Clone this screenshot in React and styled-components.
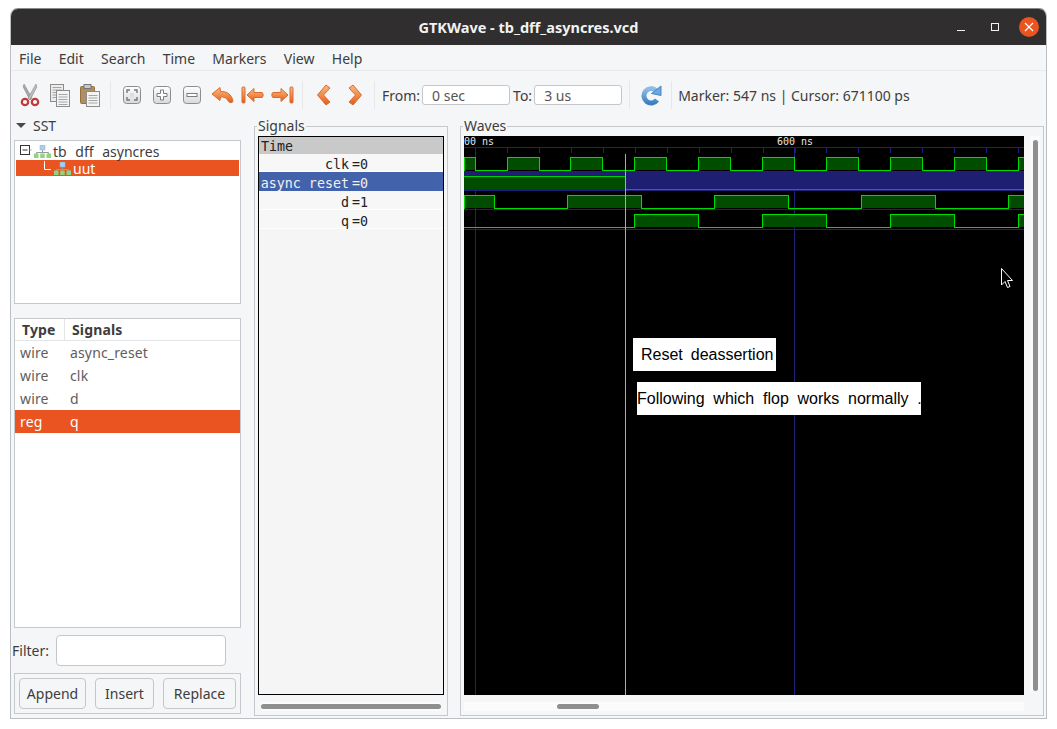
import React from "react";
import styled, { createGlobalStyle } from "styled-components";

const GlobalStyle = createGlobalStyle`
  html, body {
    margin: 0;
    padding: 0;
    background: #ffffff;
  }
  body {
    font-family: "Noto Sans", "Liberation Sans", sans-serif;
    font-size: 14px;
    color: #3d3d3d;
  }
`;

const Page = styled.div`
  width: 1057px;
  height: 729px;
  padding: 8px 0 0 10px;
  box-sizing: border-box;
  overflow: hidden;
`;

const Window = styled.div`
  width: 1037px;
  height: 711px;
  box-sizing: border-box;
  display: flex;
  flex-direction: column;
  background: #f5f6f7;
  border: 1px solid #bcbec1;
  border-top-color: #8b8b8b;
  border-radius: 8px 8px 0 0;
  overflow: hidden;
`;

const TitleBar = styled.div`
  height: 36px;
  flex: none;
  position: relative;
  display: flex;
  align-items: center;
  justify-content: center;
  background: #302e2f;
  color: #f2f2f2;
  font-size: 14.5px;
  font-weight: 700;
`;

const WindowControls = styled.div`
  position: absolute;
  top: 0;
  right: 0;
  height: 100%;
  display: flex;
  align-items: center;
  padding-right: 7px;
  gap: 14px;
`;

const ControlButton = styled.div`
  width: 20px;
  height: 20px;
  display: flex;
  align-items: center;
  justify-content: center;
  border-radius: 50%;
  background: ${(p) => (p.$close ? "#e95420" : "transparent")};
`;

const MenuBar = styled.div`
  height: 26px;
  flex: none;
  box-sizing: border-box;
  display: flex;
  align-items: center;
  padding: 1px 0 0 8px;
  gap: 17.3px;
  border-bottom: 1px solid #e9eaeb;
`;

const MenuItem = styled.span`
  font-size: 14px;
  color: #3d3d3d;
`;

const Toolbar = styled.div`
  height: 45px;
  flex: none;
  display: flex;
  align-items: center;
  padding: 3px 0 0 4px;
  box-sizing: border-box;
`;

const ToolButton = styled.div`
  width: 30px;
  height: 30px;
  flex: none;
  margin-left: ${(p) => p.$shift || 0}px;
  display: flex;
  align-items: center;
  justify-content: center;
`;

const ToolSeparator = styled.div`
  width: 1px;
  height: 28px;
  flex: none;
  background: #e6e7e8;
  margin: 0 ${(p) => p.$right || 6}px 0 ${(p) => p.$left || 5}px;
`;

const ToolLabel = styled.span`
  font-size: 14px;
  color: #3d3d3d;
  margin: 0 ${(p) => p.$right || 0}px 0 ${(p) => p.$left || 0}px;
`;

const RangeInput = styled.input`
  width: 88px;
  height: 20px;
  box-sizing: border-box;
  flex: none;
  border: 1px solid #c4c6c9;
  border-radius: 3px;
  background: #ffffff;
  padding: 0 9px;
  font: inherit;
  font-size: 14px;
  color: #555555;
  outline: none;
`;

const Main = styled.div`
  flex: 1;
  min-height: 0;
  display: flex;
  padding-left: 3px;
`;

const LeftColumn = styled.div`
  width: 227px;
  flex: none;
  display: flex;
  flex-direction: column;
`;

const SectionHeader = styled.div`
  height: 24px;
  flex: none;
  display: flex;
  align-items: center;
  gap: 7px;
  padding: 0 0 5px 2px;
  box-sizing: border-box;
  font-size: 14px;
`;

const Caret = styled.span`
  width: 0;
  height: 0;
  border-left: 5px solid transparent;
  border-right: 5px solid transparent;
  border-top: 5px solid #4a4a4a;
`;

const TreeBox = styled.div`
  height: 164px;
  flex: none;
  box-sizing: border-box;
  background: #ffffff;
  border: 1px solid #c5c8cc;
  padding: 2px 1px 0;
`;

const TreeRow = styled.div`
  height: ${(p) => (p.$selected ? 16 : 17)}px;
  box-sizing: border-box;
  display: flex;
  align-items: center;
  padding-left: ${(p) => p.$indent}px;
  padding-top: ${(p) => (p.$selected ? 1 : 0)}px;
  gap: 2px;
  font-size: 14px;
  line-height: 15px;
  word-spacing: 5px;
  background: ${(p) => (p.$selected ? "#e95420" : "transparent")};
  color: ${(p) => (p.$selected ? "#ffffff" : "#3d3d3d")};
`;

const SignalTable = styled.div`
  height: 310px;
  flex: none;
  margin-top: 14px;
  box-sizing: border-box;
  background: #ffffff;
  border: 1px solid #c5c8cc;
`;

const TableRow = styled.div`
  height: ${(p) => (p.$head ? 22 : 23)}px;
  box-sizing: border-box;
  display: grid;
  grid-template-columns: 50px 1fr;
  align-items: center;
  font-size: 14px;
  letter-spacing: 0.15px;
  font-weight: ${(p) => (p.$head ? 700 : 400)};
  color: ${(p) => (p.$selected ? "#ffffff" : p.$head ? "#3d3d3d" : "#5e5e5e")};
  background: ${(p) => (p.$selected ? "#e95420" : "transparent")};
  border-bottom: ${(p) => (p.$head ? "1px solid #e4e5e6" : "none")};
`;

const TableCell = styled.div`
  height: 100%;
  display: flex;
  align-items: center;
  box-sizing: border-box;
  padding-left: ${(p) => (p.$head ? 7 : 5)}px;
  border-right: ${(p) => (p.$divider ? "1px solid #e4e5e6" : "none")};
`;

const FilterRow = styled.div`
  height: 31px;
  flex: none;
  margin: 7px 15px 0 -2px;
  display: flex;
  align-items: center;
  gap: 7px;
  font-size: 14px;
`;

const FilterInput = styled.input`
  flex: 1;
  min-width: 0;
  height: 31px;
  box-sizing: border-box;
  border: 1px solid #c4c6c9;
  border-radius: 4px;
  background: #ffffff;
  outline: none;
`;

const ButtonFrame = styled.div`
  height: 41px;
  flex: none;
  margin-top: 7px;
  box-sizing: border-box;
  border: 1px solid #c5c8cc;
  display: flex;
  align-items: center;
  justify-content: space-between;
  padding: 0 4px;
`;

const ActionButton = styled.button`
  width: ${(p) => p.$width}px;
  height: 31px;
  box-sizing: border-box;
  padding: 0;
  border: 1px solid #c4c6c9;
  border-radius: 4px;
  background: #f5f6f7;
  font: inherit;
  font-size: 14px;
  color: #3d3d3d;
`;

const Frame = styled.fieldset`
  width: ${(p) => p.$width}px;
  height: 600px;
  flex: none;
  box-sizing: border-box;
  margin: 0 0 0 ${(p) => p.$left}px;
  padding: 0 3px;
  border: 1px solid #c5c8cc;
  min-width: 0;
  display: flex;
  flex-direction: column;
`;

const FrameLegend = styled.legend`
  padding: 0 1px;
  margin-left: -1px;
  height: 20px;
  line-height: 20px;
  font-size: 14px;
  color: #3d3d3d;
`;

const SignalList = styled.div`
  height: 559px;
  flex: none;
  box-sizing: border-box;
  border: 1px solid #000000;
  background: #f5f5f5;
  font-family: "DejaVu Sans Mono", "Liberation Mono", monospace;
  font-size: 13.33px;
  line-height: 15px;
  color: #222222;
`;

const SignalRows = styled.div`
  display: grid;
  grid-template-rows: 17px 18px repeat(3, 19px);
`;

const TimeRow = styled.div`
  background: #c9c9c9;
  padding: 2px 0 0 2px;
  box-sizing: border-box;
  display: flex;
  align-items: center;
`;

const SignalRow = styled.div`
  display: flex;
  align-items: center;
  box-sizing: border-box;
  padding-top: 4px;
  background: ${(p) => (p.$selected ? "#4263ab" : "#f7f7f7")};
  color: ${(p) => (p.$selected ? "#f0f0f0" : "#222222")};
  border-bottom: 1px solid ${(p) => (p.$selected ? "#4263ab" : "#ffffff")};
`;

const SignalName = styled.span`
  width: 90px;
  flex: none;
  text-align: right;
  white-space: pre;
`;

const SignalValue = styled.span`
  margin-left: 3px;
`;

const ScrollTrack = styled.div`
  height: 9px;
  flex: none;
  margin: 7px 0 0 ${(p) => p.$left || 0}px;
  width: ${(p) => p.$width}px;
  background: #fbfbfb;
  display: flex;
  align-items: center;
  padding-left: ${(p) => p.$thumbLeft || 0}px;
  box-sizing: border-box;
`;

const ScrollThumb = styled.div`
  width: ${(p) => p.$width}px;
  height: 5px;
  border-radius: 3px;
  background: #8f8f8f;
`;

const WaveRow = styled.div`
  display: flex;
  gap: 6px;
  height: 559px;
  flex: none;
`;

const WaveCanvas = styled.div`
  width: 560px;
  height: 559px;
  flex: none;
  position: relative;
  background: #000000;
  & > svg {
    display: block;
  }
`;

const VerticalTrack = styled.div`
  width: 10px;
  height: 555px;
  flex: none;
  background: #fbfbfb;
  display: flex;
  justify-content: center;
  padding-top: 4px;
  box-sizing: border-box;
`;

const VerticalThumb = styled.div`
  width: 5px;
  height: 551px;
  border-radius: 3px;
  background: #8f8f8f;
`;

const Annotation = styled.div`
  position: absolute;
  left: ${(p) => p.$left}px;
  top: ${(p) => p.$top}px;
  width: ${(p) => p.$width}px;
  height: 33px;
  box-sizing: border-box;
  padding-left: ${(p) => p.$pad}px;
  display: flex;
  align-items: center;
  overflow: hidden;
  background: #ffffff;
  color: #000000;
  font-family: "Liberation Sans", Arial, sans-serif;
  font-size: 16px;
  word-spacing: ${(p) => p.$words}px;
  white-space: pre;
`;

/* toolbar icons */

function Defs() {
  return (
    <svg width="0" height="0" style={{ position: "absolute" }}>
      <defs>
        <linearGradient id="orangeFill" x1="0" y1="0" x2="0" y2="1">
          <stop offset="0" stopColor="#f8bb85" />
          <stop offset="0.55" stopColor="#ef8a48" />
          <stop offset="1" stopColor="#e0581f" />
        </linearGradient>
        <linearGradient id="keyFill" x1="0" y1="0" x2="0" y2="1">
          <stop offset="0" stopColor="#ffffff" />
          <stop offset="1" stopColor="#d9d9d9" />
        </linearGradient>
        <linearGradient id="blueFill" x1="0" y1="0" x2="0" y2="1">
          <stop offset="0" stopColor="#8fbdea" />
          <stop offset="1" stopColor="#3f7fc0" />
        </linearGradient>
      </defs>
    </svg>
  );
}

const ScissorsIcon = () => (
  <svg width="20" height="24" viewBox="0 0 20 24">
    <path d="M4 1 L12 15 L10 17 L3.2 4 Z" fill="#a8a8a8" stroke="#8a8a8a" strokeWidth="0.6" />
    <path d="M16 1 L8 15 L10 17 L16.8 4 Z" fill="#bdbdbd" stroke="#8a8a8a" strokeWidth="0.6" />
    <circle cx="5" cy="19" r="3.2" fill="none" stroke="#c23b3b" strokeWidth="2.2" />
    <circle cx="15" cy="19" r="3.2" fill="none" stroke="#c23b3b" strokeWidth="2.2" />
  </svg>
);

const DocLines = ({ x, y, w, n }) =>
  Array.from({ length: n }, (_, i) => (
    <rect key={i} x={x} y={y + i * 2.5} width={w} height="1" fill="#a5a5a5" />
  ));

const CopyIcon = () => (
  <svg width="20" height="23" viewBox="0 0 20 23">
    <rect x="0.5" y="0.5" width="13" height="17" fill="#ececec" stroke="#8c8c8c" />
    <DocLines x={2.5} y={3} w={9} n={5} />
    <rect x="6.5" y="6.5" width="13" height="16" fill="#f4f4f4" stroke="#8c8c8c" />
    <DocLines x={8.5} y={10} w={9} n={5} />
  </svg>
);

const PasteIcon = () => (
  <svg width="20" height="23" viewBox="0 0 20 23">
    <rect x="0.5" y="2.5" width="14" height="17" rx="1" fill="#b18e5f" stroke="#8f7148" />
    <rect x="4" y="0.5" width="7" height="4" fill="#c9c9c9" stroke="#777777" />
    <rect x="6.5" y="7.5" width="13" height="15" fill="#f4f4f4" stroke="#8c8c8c" />
    <DocLines x={8.5} y={11} w={9} n={4} />
  </svg>
);

const KeyIcon = ({ children }) => (
  <svg width="18" height="18" viewBox="0 0 18 18">
    <rect x="0.5" y="0.5" width="17" height="17" rx="3" fill="url(#keyFill)" stroke="#8d8d8d" />
    {children}
  </svg>
);

const ZoomFitIcon = () => (
  <KeyIcon>
    <path
      d="M4 7 V4 H7 M11 4 H14 V7 M14 11 V14 H11 M7 14 H4 V11"
      fill="none"
      stroke="#777777"
      strokeWidth="1.4"
    />
    <rect x="7" y="7" width="4" height="4" fill="#dddddd" />
  </KeyIcon>
);

const ZoomInIcon = () => (
  <KeyIcon>
    <path
      d="M7.5 4 H10.5 V7.5 H14 V10.5 H10.5 V14 H7.5 V10.5 H4 V7.5 H7.5 Z"
      fill="#ffffff"
      stroke="#7d7d7d"
    />
  </KeyIcon>
);

const ZoomOutIcon = () => (
  <KeyIcon>
    <rect x="4" y="7.5" width="10" height="3" fill="#ffffff" stroke="#7d7d7d" />
  </KeyIcon>
);

const UndoIcon = () => (
  <svg width="23" height="18" viewBox="0 0 23 18">
    <path
      d="M1 8 L9 1.5 L9.5 5.5 C15 5 21 8 22 15.5 C21 17 18.5 17 17.5 15.5 C16 12 13 10.8 9.5 10.8 L9 14.5 Z"
      fill="url(#orangeFill)"
      stroke="#dd6a2c"
      strokeLinejoin="round"
    />
  </svg>
);

const JumpIcon = ({ $flip }) => (
  <svg width="23" height="18" viewBox="0 0 23 18" style={$flip ? { transform: "scaleX(-1)" } : undefined}>
    <rect x="1" y="1" width="3" height="16" rx="1" fill="url(#orangeFill)" stroke="#dd6a2c" />
    <path
      d="M6 9 L13 2.5 V6.5 H21 C22.5 6.5 22.5 11.5 21 11.5 H13 V15.5 Z"
      fill="url(#orangeFill)"
      stroke="#dd6a2c"
      strokeLinejoin="round"
    />
  </svg>
);

const ChevronIcon = ({ $flip }) => (
  <svg width="15" height="22" viewBox="0 0 15 22" style={$flip ? { transform: "scaleX(-1)" } : undefined}>
    <path
      d="M10 1 L14 4 L7.5 11 L14 18 L10 21 L1.5 11 Z"
      fill="url(#orangeFill)"
      stroke="#dd6a2c"
      strokeLinejoin="round"
    />
  </svg>
);

const RefreshIcon = () => (
  <svg width="21" height="22" viewBox="0 0 21 22">
    <path
      d="M15 6.5 A7.2 7.2 0 1 0 16 16"
      fill="none"
      stroke="url(#blueFill)"
      strokeWidth="5"
    />
    <path d="M20 2 V11.5 L10.5 9.5 Z" fill="#6ea6dd" stroke="#4a88c6" strokeLinejoin="round" />
  </svg>
);

const TreeIcon = () => (
  <svg width="17" height="13" viewBox="0 0 17 13">
    <rect x="6" y="0" width="5" height="5" fill="#a9cbee" stroke="#8fb3da" strokeWidth="0.5" />
    <path d="M8.5 5 V7.5 M2.5 9 V7.5 H14.5 V9" fill="none" stroke="#9a9a9a" />
    <rect x="0" y="8.5" width="4.5" height="4.5" fill="#8fd480" />
    <rect x="6.2" y="8.5" width="4.5" height="4.5" fill="#8fd480" />
    <rect x="12.5" y="8.5" width="4.5" height="4.5" fill="#8fd480" />
  </svg>
);

const ExpanderIcon = () => (
  <svg width="12" height="17" viewBox="0 0 12 17">
    <rect x="0.5" y="2.5" width="9" height="9" fill="#ffffff" stroke="#333333" />
    <path d="M2.5 7 H7.5" stroke="#333333" />
    <path d="M9.5 7 H12" stroke="#b8b8b8" />
  </svg>
);

const ElbowIcon = () => (
  <svg width="8" height="16" viewBox="0 0 8 16">
    <path d="M0.5 0 V8.5 H7" fill="none" stroke="#ffffff" />
  </svg>
);

/* wave data, x positions in window pixels */

const WAVE_LEFT = 464;
const WAVE_RIGHT = 1024;

const clkEdges = Array.from({ length: 9 }, (_, i) => [507 + i * 63.9, 539 + i * 63.9]);

const traces = [
  { top: 157, bottom: 170, spans: [[WAVE_LEFT, 475.5], ...clkEdges, [1018, WAVE_RIGHT]] },
  {
    top: 195,
    bottom: 208,
    spans: [[WAVE_LEFT, 494.5], [567.5, 641.5], [714, 788.5], [861.5, 935.5], [1008.5, WAVE_RIGHT]],
  },
  {
    top: 214,
    bottom: 227,
    spans: [[634.5, 698.5], [762.5, 826.5], [890.5, 954.5], [1018.5, WAVE_RIGHT]],
  },
];

const px = (v) => Math.floor(v) + 0.5;

function Trace({ top, bottom, spans }) {
  let line = "";
  let x = WAVE_LEFT;
  spans.forEach(([a, b]) => {
    if (a > x) line += `M${x} ${bottom + 0.5} H${px(a)} `;
    line += `M${px(a)} ${bottom + 0.5} V${top + 0.5} H${px(b)} V${bottom + 0.5} `;
    x = px(b);
  });
  if (x < WAVE_RIGHT) line += `M${x} ${bottom + 0.5} H${WAVE_RIGHT}`;
  return (
    <g>
      {spans.map(([a, b]) => (
        <rect key={a} x={px(a)} y={top} width={px(b) - px(a)} height={bottom - top} fill="#004d00" />
      ))}
      <path d={line} fill="none" stroke="#00dc00" />
    </g>
  );
}

function WaveChart() {
  const ticks = [];
  for (let x = 475.5; x < WAVE_RIGHT; x += 31.95) ticks.push(px(x));

  return (
    <svg width="560" height="559" viewBox="464 136 560 559" shapeRendering="crispEdges">
      <rect x="464" y="136" width="560" height="559" fill="#000000" />
      <g stroke="#20207a">
        <path d="M464 147.5 H1024 M464 171.5 H1024 M464 190.5 H1024 M464 209.5 H1024 M464 229.5 H1024" />
        {ticks.map((x) => (
          <path key={x} d={`M${x} 148 V153`} />
        ))}
        <path d="M475.5 148 V695 M794.5 148 V695" />
      </g>
      <rect x="464" y="172" width="560" height="18" fill="#1e1e72" />
      <rect x="464" y="176" width="161" height="13" fill="#004d00" />
      <path d="M625.5 189.5 H1024" fill="none" stroke="#00a000" />
      <path d="M464 176.5 H625.5 V189.5" fill="none" stroke="#00d000" />
      {traces.map((t) => (
        <Trace key={t.top} {...t} />
      ))}
      <path d="M625.5 154 V695" stroke="#ee8f8f" />
      <g
        fontFamily="'DejaVu Sans Mono', monospace"
        fontSize="10"
        fill="#e4e4e4"
        shapeRendering="auto"
      >
        <text x="464" y="145">00 ns</text>
        <text x="777" y="145">600 ns</text>
      </g>
      <path
        d="M1001.5 268.5 V285 L1005 281.5 L1007.5 287.5 L1010 286.5 L1007.5 280.5 L1012.5 280.5 Z"
        fill="#000000"
        stroke="#ffffff"
        shapeRendering="auto"
      />
    </svg>
  );
}

const menus = ["File", "Edit", "Search", "Time", "Markers", "View", "Help"];

const tableRows = [
  { type: "wire", name: "async_reset" },
  { type: "wire", name: "clk" },
  { type: "wire", name: "d" },
  { type: "reg", name: "q", selected: true },
];

const signals = [
  { name: "clk", value: "=0" },
  { name: "async reset", value: "=0", selected: true },
  { name: "d", value: "=1" },
  { name: "q", value: "=0" },
];

export default function App() {
  return (
    <Page>
      <GlobalStyle />
      <Defs />
      <Window>
        <TitleBar>
          GTKWave - tb_dff_asyncres.vcd
          <WindowControls>
            <ControlButton>
              <svg width="10" height="10" viewBox="0 0 10 10">
                <path d="M1 8.5 H9" stroke="#f2f2f2" />
              </svg>
            </ControlButton>
            <ControlButton>
              <svg width="10" height="10" viewBox="0 0 10 10">
                <rect x="1.5" y="1.5" width="7" height="7" fill="none" stroke="#f2f2f2" />
              </svg>
            </ControlButton>
            <ControlButton $close>
              <svg width="10" height="10" viewBox="0 0 10 10">
                <path d="M1 1 L9 9 M9 1 L1 9" stroke="#ffffff" strokeWidth="1.2" />
              </svg>
            </ControlButton>
          </WindowControls>
        </TitleBar>

        <MenuBar>
          {menus.map((m) => (
            <MenuItem key={m}>{m}</MenuItem>
          ))}
        </MenuBar>

        <Toolbar>
          <ToolButton><ScissorsIcon /></ToolButton>
          <ToolButton><CopyIcon /></ToolButton>
          <ToolButton><PasteIcon /></ToolButton>
          <ToolSeparator />
          <ToolButton><ZoomFitIcon /></ToolButton>
          <ToolButton><ZoomInIcon /></ToolButton>
          <ToolButton><ZoomOutIcon /></ToolButton>
          <ToolButton><UndoIcon /></ToolButton>
          <ToolButton><JumpIcon /></ToolButton>
          <ToolButton><JumpIcon $flip /></ToolButton>
          <ToolSeparator $right={5} />
          <ToolButton><ChevronIcon /></ToolButton>
          <ToolButton $shift={2}><ChevronIcon $flip /></ToolButton>
          <ToolSeparator $left={4} $right={7} />
          <ToolLabel $right={2}>From:</ToolLabel>
          <RangeInput readOnly value="0 sec" />
          <ToolLabel $left={3} $right={2}>To:</ToolLabel>
          <RangeInput readOnly value="3 us" />
          <ToolSeparator $left={7} $right={6} />
          <ToolButton><RefreshIcon /></ToolButton>
          <ToolSeparator $left={5} $right={6} />
          <ToolLabel>Marker: 547 ns | Cursor: 671100 ps</ToolLabel>
        </Toolbar>

        <Main>
          <LeftColumn>
            <SectionHeader>
              <Caret />
              SST
            </SectionHeader>
            <TreeBox>
              <TreeRow $indent={4}>
                <ExpanderIcon />
                <TreeIcon />
                tb dff asyncres
              </TreeRow>
              <TreeRow $selected $indent={28}>
                <ElbowIcon />
                <TreeIcon />
                uut
              </TreeRow>
            </TreeBox>

            <SignalTable>
              <TableRow $head>
                <TableCell $head $divider>Type</TableCell>
                <TableCell $head>Signals</TableCell>
              </TableRow>
              {tableRows.map((r) => (
                <TableRow key={r.name} $selected={r.selected}>
                  <TableCell>{r.type}</TableCell>
                  <TableCell>{r.name}</TableCell>
                </TableRow>
              ))}
            </SignalTable>

            <FilterRow>
              Filter:
              <FilterInput readOnly />
            </FilterRow>

            <ButtonFrame>
              <ActionButton $width={67}>Append</ActionButton>
              <ActionButton $width={59}>Insert</ActionButton>
              <ActionButton $width={73}>Replace</ActionButton>
            </ButtonFrame>
          </LeftColumn>

          <Frame $width={194} $left={13}>
            <FrameLegend>Signals</FrameLegend>
            <SignalList>
              <SignalRows>
                <TimeRow>Time</TimeRow>
                {signals.map((s) => (
                  <SignalRow key={s.name} $selected={s.selected}>
                    <SignalName>{s.name}</SignalName>
                    <SignalValue>{s.value}</SignalValue>
                  </SignalRow>
                ))}
              </SignalRows>
            </SignalList>
            <ScrollTrack $left={3} $width={180}>
              <ScrollThumb $width={180} />
            </ScrollTrack>
          </Frame>

          <Frame $width={584} $left={12}>
            <FrameLegend>Waves</FrameLegend>
            <WaveRow>
              <WaveCanvas>
                <WaveChart />
                <Annotation $left={169} $top={202} $width={143} $pad={8} $words={3.5}>Reset deassertion</Annotation>
                <Annotation $left={173} $top={246} $width={284} $pad={0} $words={4.3}>Following which flop works normally .</Annotation>
              </WaveCanvas>
              <VerticalTrack>
                <VerticalThumb />
              </VerticalTrack>
            </WaveRow>
            <ScrollTrack $width={560} $thumbLeft={93}>
              <ScrollThumb $width={42} />
            </ScrollTrack>
          </Frame>
        </Main>
      </Window>
    </Page>
  );
}
